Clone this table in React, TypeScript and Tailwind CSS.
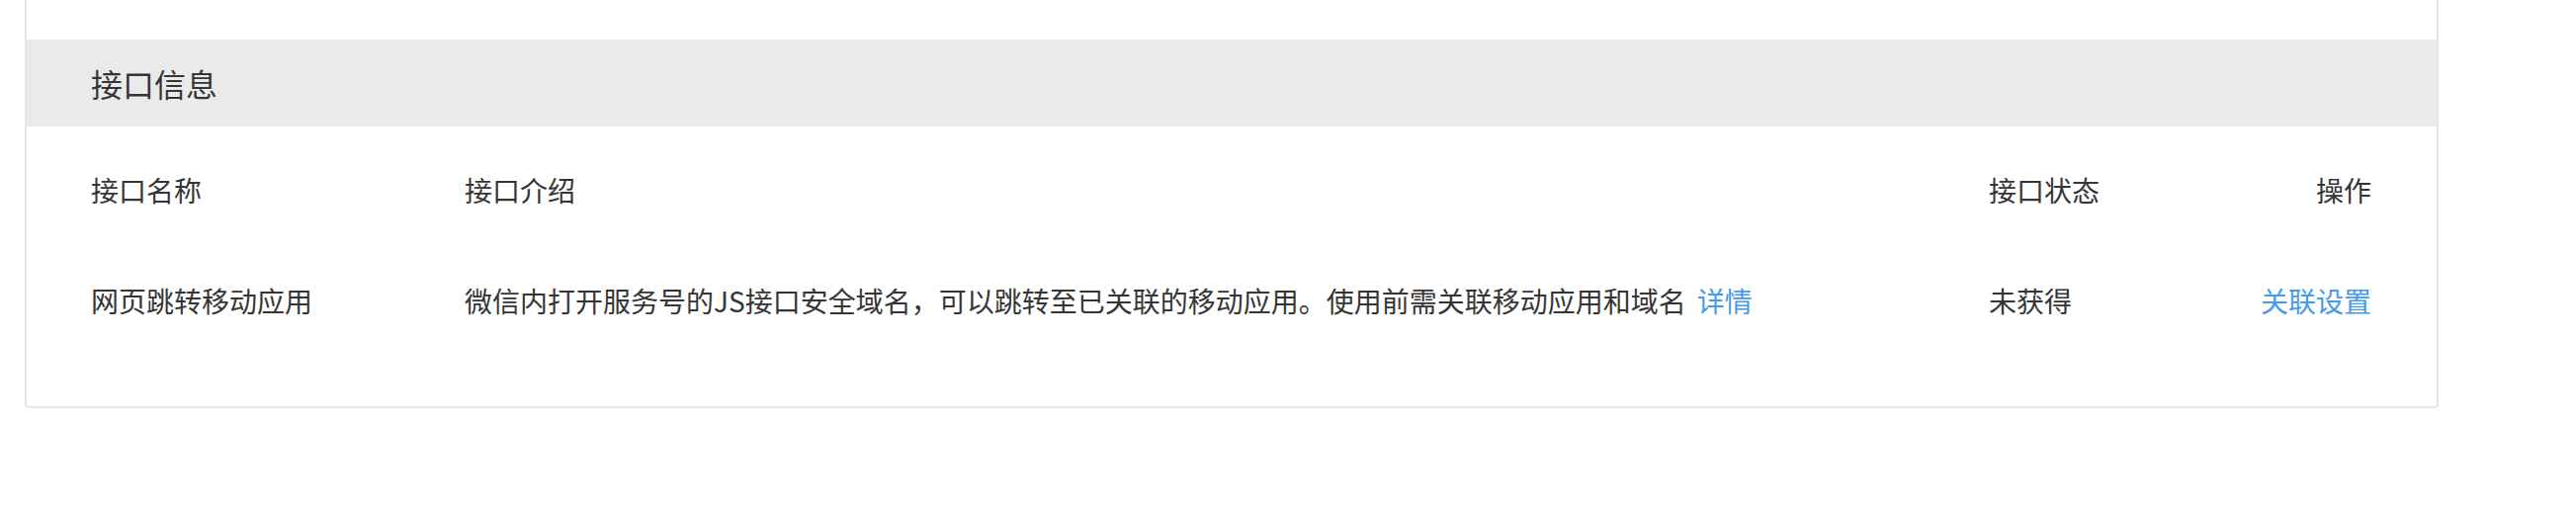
const font = { fontFamily: '"Noto Sans CJK SC", "Noto Sans", sans-serif' };

interface ApiRow {
  name: string;
  intro: string;
  status: string;
  action: string;
}

const rows: ApiRow[] = [
  {
    name: "网页跳转移动应用",
    intro: "微信内打开服务号的JS接口安全域名，可以跳转至已关联的移动应用。使用前需关联移动应用和域名",
    status: "未获得",
    action: "关联设置",
  },
];

export default function App() {
  return (
    <div className="min-h-[514px] w-[2606px] bg-white text-[#353535]" style={font}>
      <div className="ml-[25px] w-[2442px] border-x-2 border-b-2 border-[#e6e6e6] rounded-b-[4px] bg-white">
        <div className="h-[40px]" />

        {/* section title */}
        <div className="h-[88px] bg-[#eaeaea] pl-[65px] flex items-center text-[32px] leading-none">
          接口信息
        </div>

        {/* table */}
        <div className="pt-[8px] pb-[51px] pl-[65px] pr-[66px] text-[28px] leading-none">
          <div className="grid grid-cols-[378px_1fr_240px_147px] h-[112px] items-center">
            <span>接口名称</span>
            <span>接口介绍</span>
            <span>接口状态</span>
            <span className="text-right">操作</span>
          </div>
          {rows.map((r) => (
            <div key={r.name} className="grid grid-cols-[378px_1fr_240px_147px] h-[112px] items-center">
              <span>{r.name}</span>
              <span>
                {r.intro}
                <a className="ml-[11px] text-[#459ae9] cursor-pointer">详情</a>
              </span>
              <span>{r.status}</span>
              <a className="text-right text-[#459ae9] cursor-pointer">{r.action}</a>
            </div>
          ))}
        </div>
      </div>
    </div>
  );
}
